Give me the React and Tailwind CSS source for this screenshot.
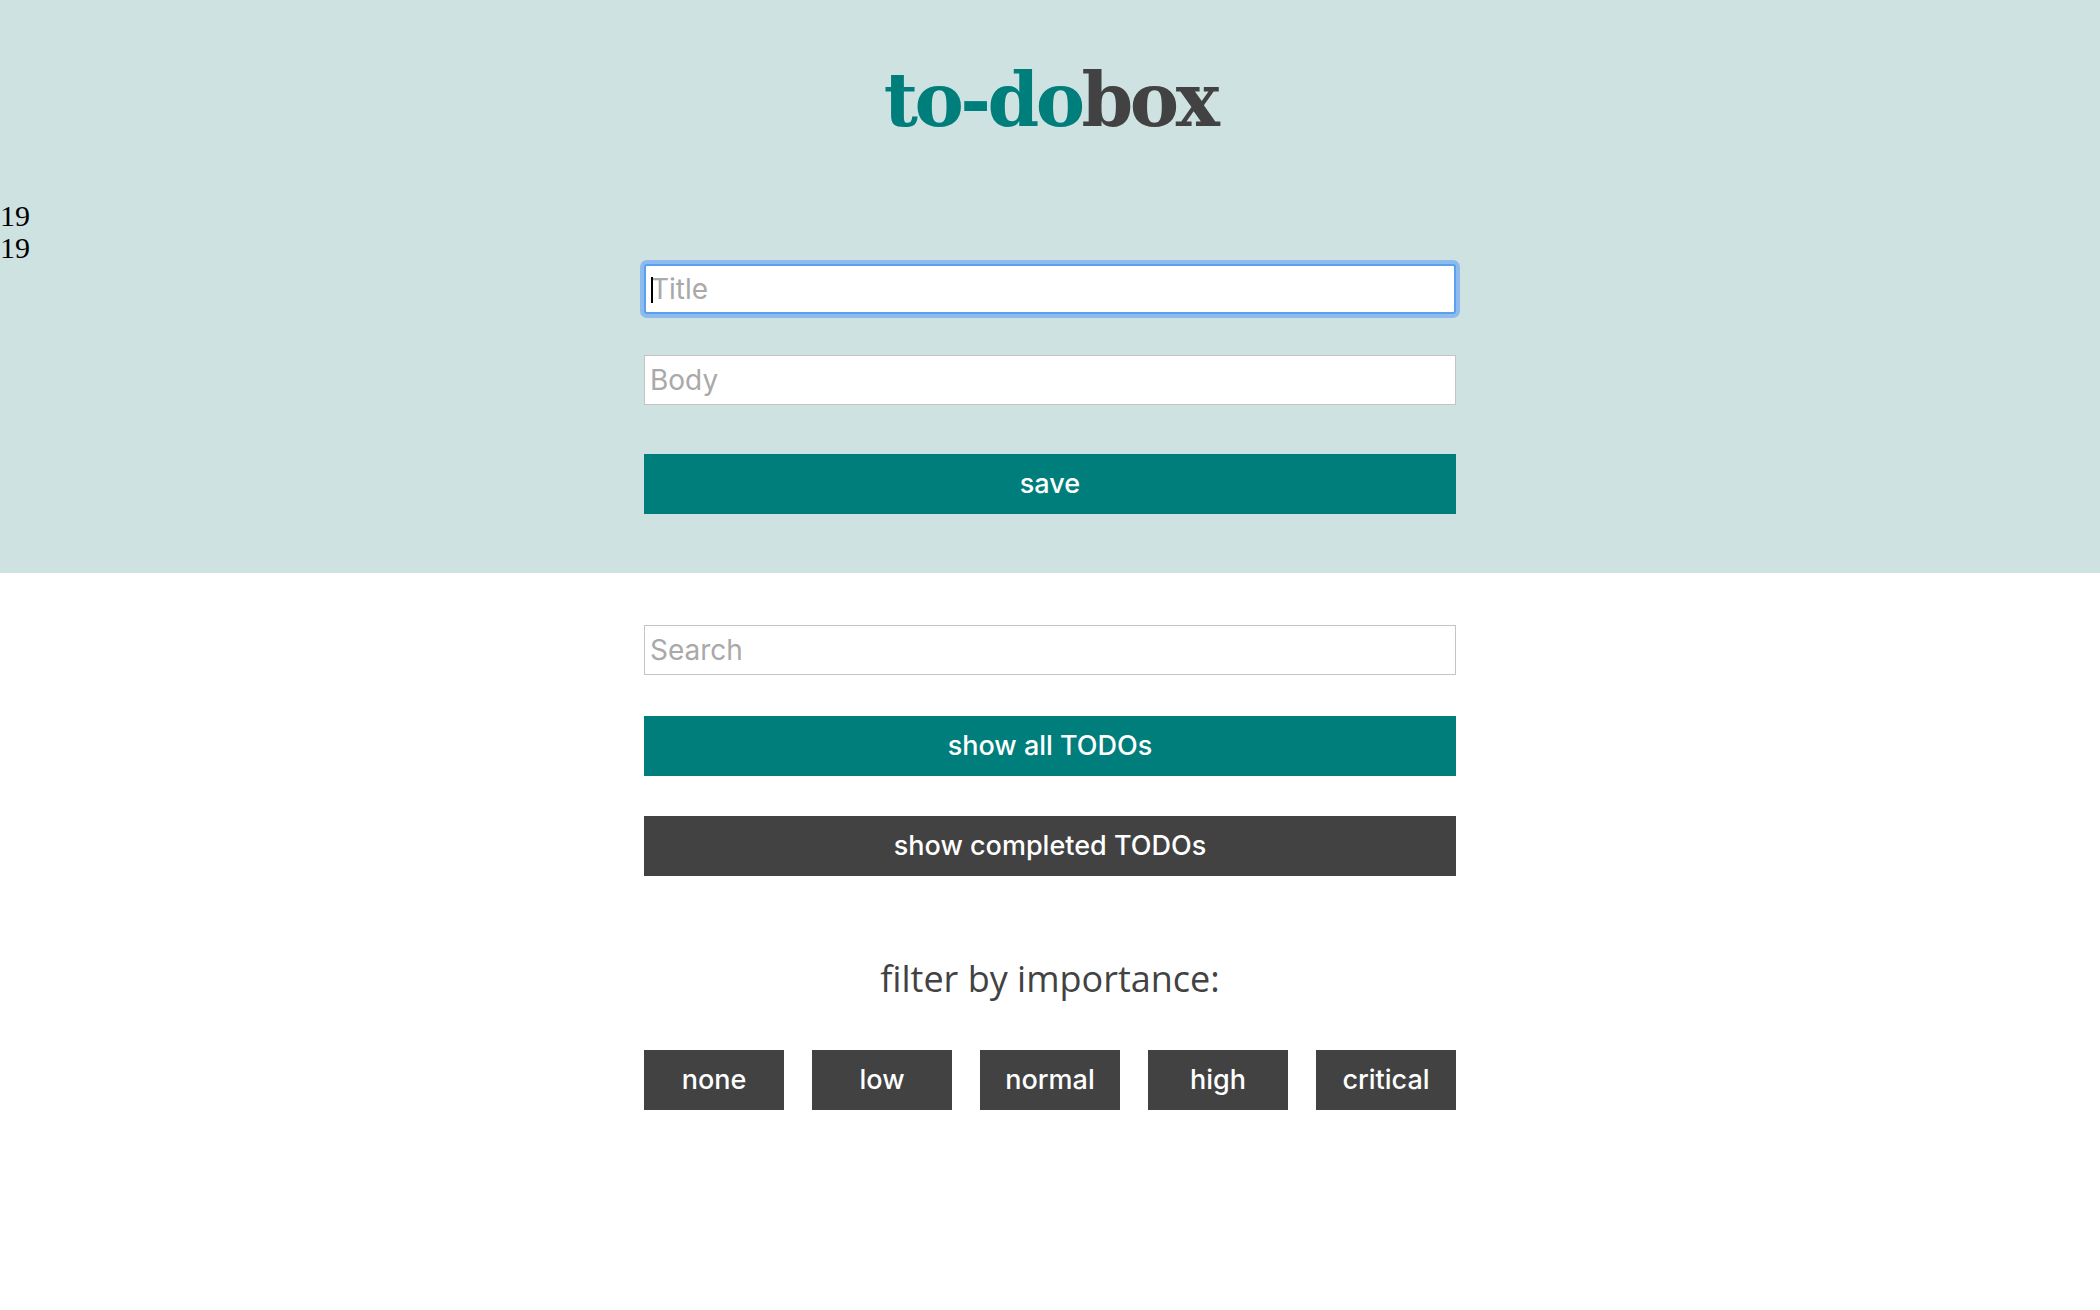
import React from "react";

export default function App() {
  const levels = ["none", "low", "normal", "high", "critical"];
  return (
    <div className="min-h-screen bg-white">
      <header className="bg-[#cfe2e2] h-[573px] pt-[40px]">
        <h1 className="text-center font-['DejaVu_Serif',serif] font-bold text-[74px] leading-[120px] h-[120px] tracking-[-3.5px]">
          <span className="text-[#007e7b]">to-do</span>
          <span className="text-[#424242]">box</span>
        </h1>
        <div className="mt-[40px] font-['Liberation_Serif',serif] text-[30px] leading-[32px] text-black">
          <div>19</div>
          <div>19</div>
        </div>
        <div className="w-[812px] mx-auto flex flex-col mt-0 font-['Inter',sans-serif]">
          <div className="relative">
            <input
              placeholder="Title"
              className="block w-full h-[50px] bg-white border-2 border-[#5b9ff0] rounded-[3px] shadow-[0_0_0_4px_rgba(125,178,240,0.8)] px-[5px] text-[28px] placeholder:text-[#a9a9a9] outline-none"
            />
            <span className="absolute left-[7px] top-[13px] w-[2px] h-[26px] bg-black" />
          </div>
          <input
            placeholder="Body"
            className="block w-full h-[50px] mt-[41px] bg-white border border-[#c4c4c4] px-[5px] text-[28px] placeholder:text-[#a9a9a9] outline-none"
          />
          <button className="mt-[49px] h-[60px] w-full bg-[#007e7b] text-white text-[27px] font-medium">
            save
          </button>
        </div>
      </header>
      <main className="w-[812px] mx-auto flex flex-col pt-[52px] font-['Inter',sans-serif]">
        <input
          placeholder="Search"
          className="block w-full h-[50px] bg-white border border-[#c4c4c4] px-[5px] text-[28px] placeholder:text-[#a9a9a9] outline-none"
        />
        <button className="mt-[41px] h-[60px] w-full bg-[#007e7b] text-white text-[27px] font-medium">
          show all TODOs
        </button>
        <button className="mt-[40px] h-[60px] w-full bg-[#424242] text-white text-[27px] font-medium">
          show completed TODOs
        </button>
        <p className="mt-[78px] text-center font-['Open_Sans',sans-serif] text-[36px] leading-[50px] text-[#424242]">
          filter by importance:
        </p>
        <div className="mt-[46px] flex gap-[28px]">
          {levels.map((l) => (
            <button
              key={l}
              className="w-[140px] h-[60px] bg-[#424242] text-white text-[27px] font-medium"
            >
              {l}
            </button>
          ))}
        </div>
      </main>
    </div>
  );
}
